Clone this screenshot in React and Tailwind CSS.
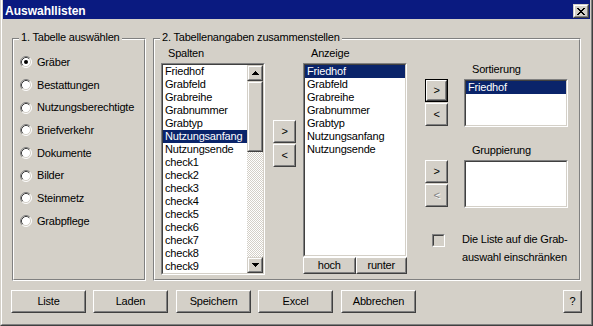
import React from 'react';

const Raised = ({ className = '', innerClass = '', children }) => (
  <div className={`bg-[#d4d0c8] border border-t-white border-l-white border-r-[#404040] border-b-[#404040] ${className}`}>
    <div className={`h-full w-full border border-t-[#d4d0c8] border-l-[#d4d0c8] border-r-[#808080] border-b-[#808080] flex items-center justify-center ${innerClass}`}>
      {children}
    </div>
  </div>
);

const DefaultBtn = ({ className = '', children }) => (
  <div className={`border border-black ${className}`}>
    <Raised className="h-full w-full">{children}</Raised>
  </div>
);

const ScrollBtn = ({ className = '', children }) => (
  <div className={`bg-[#d4d0c8] border border-t-[#d4d0c8] border-l-[#d4d0c8] border-r-[#404040] border-b-[#404040] ${className}`}>
    <div className="h-full w-full border border-t-white border-l-white border-r-[#808080] border-b-[#808080] flex items-center justify-center">
      {children}
    </div>
  </div>
);

const Sunken = ({ className = '', innerClass = '', children }) => (
  <div className={`border border-t-[#808080] border-l-[#808080] border-r-white border-b-white ${className}`}>
    <div className={`h-full w-full border border-t-[#404040] border-l-[#404040] border-r-[#d4d0c8] border-b-[#d4d0c8] ${innerClass}`}>
      {children}
    </div>
  </div>
);

const Group = ({ className = '', label, innerClass = '', children }) => (
  <div className={`relative border border-t-[#808080] border-l-[#808080] border-r-white border-b-white ${className}`}>
    <div className={`h-full w-full border border-t-white border-l-white border-r-[#808080] border-b-[#808080] ${innerClass}`}>
      {children}
    </div>
    <div className="absolute left-[6px] top-[-8px] px-[2px] bg-[#d4d0c8] leading-[13px] whitespace-nowrap">{label}</div>
  </div>
);

const Radio = ({ checked }) => (
  <svg width="12" height="12" viewBox="0 0 12 12" className="shrink-0">
    <circle cx="6" cy="6" r="5" fill="#ffffff" />
    <path d="M2.11 9.89 A5.5 5.5 0 0 1 9.89 2.11" fill="none" stroke="#808080" strokeWidth="1" />
    <path d="M9.89 2.11 A5.5 5.5 0 0 1 2.11 9.89" fill="none" stroke="#ffffff" strokeWidth="1" />
    <path d="M2.82 9.18 A4.5 4.5 0 0 1 9.18 2.82" fill="none" stroke="#404040" strokeWidth="1" />
    <path d="M9.18 2.82 A4.5 4.5 0 0 1 2.82 9.18" fill="none" stroke="#d4d0c8" strokeWidth="1" />
    {checked && <circle cx="6" cy="6" r="2" fill="#000000" />}
  </svg>
);

const UpArrow = () => (
  <svg width="7" height="4" viewBox="0 0 7 4" shapeRendering="crispEdges">
    <path d="M3 0h1v1h1v1h1v1h1v1H0V3h1V2h1V1h1z" fill="#000" />
  </svg>
);

const DownArrow = () => (
  <svg width="7" height="4" viewBox="0 0 7 4" shapeRendering="crispEdges">
    <path d="M0 0h7v1H6v1H5v1H4v1H3V3H2V2H1V1H0z" fill="#000" />
  </svg>
);

const CloseX = () => (
  <svg width="8" height="7" viewBox="0 0 8 7" shapeRendering="crispEdges">
    <path
      d="M0 0h2v1H0zM6 0h2v1H6zM1 1h2v1H1zM5 1h2v1H5zM2 2h4v1H2zM3 3h2v1H3zM2 4h4v1H2zM1 5h2v1H1zM5 5h2v1H5zM0 6h2v1H0zM6 6h2v1H6z"
      fill="#000"
    />
  </svg>
);

const Item = ({ children, selected }) => (
  <div className={`h-[13px] leading-[13px] pl-[2px] whitespace-nowrap ${selected ? 'bg-[#0a246a] text-white' : ''}`}>{children}</div>
);

const spalten = [
  'Friedhof', 'Grabfeld', 'Grabreihe', 'Grabnummer', 'Grabtyp', 'Nutzungsanfang', 'Nutzungsende',
  'check1', 'check2', 'check3', 'check4', 'check5', 'check6', 'check7', 'check8', 'check9',
];

const anzeige = ['Friedhof', 'Grabfeld', 'Grabreihe', 'Grabnummer', 'Grabtyp', 'Nutzungsanfang', 'Nutzungsende'];

const radios = ['Gräber', 'Bestattungen', 'Nutzungsberechtigte', 'Briefverkehr', 'Dokumente', 'Bilder', 'Steinmetz', 'Grabpflege'];

export default function App() {
  return (
    <div className="w-[593px] h-[326px] font-['Liberation_Sans',Arial,sans-serif] text-[11px] leading-[13px] tracking-[-0.2px] text-black select-none">
      <div className="h-full w-full border-l border-r border-b border-l-[#d4d0c8] border-r-[#404040] border-b-[#404040]">
        <div className="h-full w-full border-l border-r border-b border-l-white border-r-[#808080] border-b-[#808080]">
          <div className="h-full w-full border-l border-r border-b border-[#d4d0c8] bg-[#d4d0c8] flex flex-col">
            {/* Title bar */}
            <div className="h-[19px] bg-[#0a1a80] flex items-start justify-between pt-[4px] pl-[2px] pr-[1px]">
              <span className="text-white font-bold text-[12px] tracking-normal leading-[14px]">Auswahllisten</span>
              <ScrollBtn className="w-[16px] h-[14px]">
                <CloseX />
              </ScrollBtn>
            </div>

            {/* Groups */}
            <div className="mt-[19px] pl-[9px] flex gap-[7px] h-[243px]">
              <Group className="w-[134px] h-full" label="1. Tabelle auswählen" innerClass="flex flex-col pt-[11px] pl-[6px]">
                {radios.map((r, i) => (
                  <div key={r} className="h-[22.7px] flex items-center gap-[5px] whitespace-nowrap">
                    <Radio checked={i === 0} />
                    <span>{r}</span>
                  </div>
                ))}
              </Group>

              <Group className="w-[428px] h-full" label="2. Tabellenangaben zusammenstellen" innerClass="flex items-start">
                {/* Spalten */}
                <div className="ml-[6px] w-[104px] flex flex-col pt-[7px]">
                  <div className="pl-[7px]">Spalten</div>
                  <Sunken className="mt-[3px] h-[212px] w-[104px]" innerClass="bg-white flex">
                    <div className="flex-1 flex flex-col">
                      {spalten.map((s) => (
                        <Item key={s} selected={s === 'Nutzungsanfang'}>{s}</Item>
                      ))}
                    </div>
                    <div className="w-[16px] flex flex-col">
                      <ScrollBtn className="h-[16px]"><UpArrow /></ScrollBtn>
                      <ScrollBtn className="h-[71px]" />
                      <div className="flex-1 [background-image:repeating-conic-gradient(#d4d0c8_0%_25%,#ffffff_0%_50%)] [background-size:2px_2px]" />
                      <ScrollBtn className="h-[16px]"><DownArrow /></ScrollBtn>
                    </div>
                  </Sunken>
                </div>

                {/* Arrows */}
                <div className="ml-[8px] w-[23px] pt-[80px] flex flex-col gap-[1px]">
                  <Raised className="h-[23px]">&gt;</Raised>
                  <Raised className="h-[23px]">&lt;</Raised>
                </div>

                {/* Anzeige */}
                <div className="ml-[7px] w-[104px] flex flex-col pt-[7px]">
                  <div className="pl-[8px]">Anzeige</div>
                  <Sunken className="mt-[3px] h-[194px] w-[104px]" innerClass="bg-white flex flex-col">
                    {anzeige.map((s) => (
                      <Item key={s} selected={s === 'Friedhof'}>{s}</Item>
                    ))}
                  </Sunken>
                  <div className="flex">
                    <Raised className="w-[53px] h-[17px]">hoch</Raised>
                    <Raised className="w-[52px] h-[17px]">runter</Raised>
                  </div>
                </div>

                {/* Right block */}
                <div className="ml-[18px] flex flex-col pt-[23px]">
                  <div className="pl-[47px]">Sortierung</div>
                  <div className="mt-[3px] flex">
                    <div className="w-[23px] flex flex-col gap-[1px]">
                      <DefaultBtn className="h-[23px]">&gt;</DefaultBtn>
                      <Raised className="h-[23px]">&lt;</Raised>
                    </div>
                    <Sunken className="ml-[16px] w-[104px] h-[48px]" innerClass="bg-white">
                      <Item selected>Friedhof</Item>
                    </Sunken>
                  </div>

                  <div className="mt-[17px] pl-[47px]">Gruppierung</div>
                  <div className="mt-[3px] flex">
                    <div className="w-[23px] flex flex-col gap-[1px]">
                      <Raised className="h-[23px]">&gt;</Raised>
                      <Raised className="h-[23px]" innerClass="text-[#808080] [text-shadow:1px_1px_0_#ffffff]">&lt;</Raised>
                    </div>
                    <Sunken className="ml-[16px] w-[104px] h-[48px]" innerClass="bg-white" />
                  </div>

                  <div className="mt-[22px] flex items-start">
                    <Sunken className="ml-[7px] mt-[4px] w-[13px] h-[13px]" innerClass="bg-[#d4d0c8]" />
                    <div className="ml-[17px] leading-[18px] whitespace-nowrap">
                      Die Liste auf die Grab-
                      <br />
                      auswahl einschränken
                    </div>
                  </div>
                </div>
              </Group>
            </div>

            {/* Bottom buttons */}
            <div className="mt-[9px] pl-[8px] pr-[8px] flex">
              <Raised className="w-[75px] h-[23px]">Liste</Raised>
              <Raised className="ml-[7px] w-[75px] h-[23px]">Laden</Raised>
              <Raised className="ml-[8px] w-[75px] h-[23px]">Speichern</Raised>
              <Raised className="ml-[7px] w-[75px] h-[23px]">Excel</Raised>
              <Raised className="ml-[8px] w-[75px] h-[23px]">Abbrechen</Raised>
              <Raised className="ml-auto w-[19px] h-[23px]">?</Raised>
            </div>
          </div>
        </div>
      </div>
    </div>
  );
}
